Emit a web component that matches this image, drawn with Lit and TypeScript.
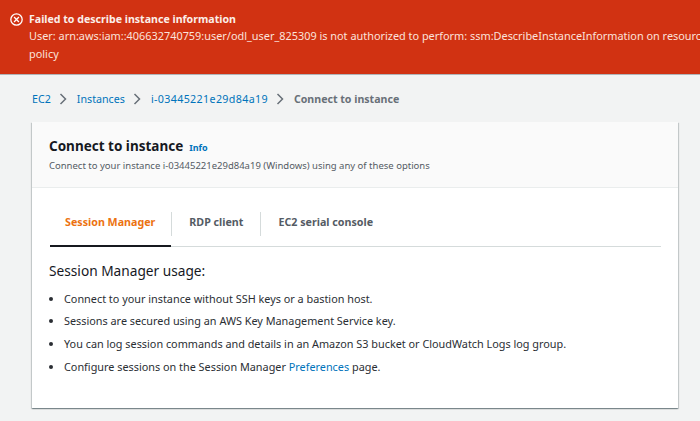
import { LitElement, html, css } from "lit";
import { customElement } from "lit/decorators.js";

@customElement("app-root")
export class AppRoot extends LitElement {
  static styles = css`
    :host { display: block; width: 700px; height: 421px; overflow: hidden; background: #f2f3f3; font-family: "Noto Sans", sans-serif; color: #16191f; }
    .flash { height: 75px; box-sizing: border-box; background: #d13212; color: #fff; padding: 12px 0 0 10px; display: flex; gap: 6px; border-bottom: 1px solid #b0b4b8; white-space: nowrap; overflow: hidden; }
    .flash svg { flex: none; width: 13px; height: 13px; margin-top: 1px; }
    .flash .msg { font-size: 10.9px; line-height: 17.5px; color: #fbe3dc; }
    .flash b { display: block; font-size: 10.6px; font-weight: 700; color: #fbeee9; line-height: 15px; }
    .crumbs { display: flex; align-items: center; height: 46px; padding: 1px 0 0 32px; font-size: 10.7px; color: #0073bb; }
    .crumbs svg { width: 9px; height: 12px; margin: 0 8.5px; }
    .crumbs .id { letter-spacing: .35px; }
    .crumbs .cur { color: #687078; font-weight: 700; font-size: 10.6px; }
    .card { margin: 0 22px 0 32px; height: 286px; background: #fff; box-shadow: 0 1px 1px 0 rgba(0,28,36,.3), 1px 1px 1px 0 rgba(0,28,36,.15), -1px 1px 1px 0 rgba(0,28,36,.15); }
    .head { height: 66px; box-sizing: border-box; background: #fafafa; border-bottom: 1px solid #eaeded; padding: 14px 17px 0; }
    .title { display: flex; align-items: baseline; gap: 6px; font-size: 13.5px; font-weight: 700; line-height: 20px; color: #16191f; }
    .title a { font-size: 9px; color: #0073bb; }
    .desc { font-size: 9.5px; line-height: 12px; color: #545b64; margin-top: 2px; }
    .tabs { display: flex; margin: 12px 17px 0 18px; height: 47px; border-bottom: 1px solid #d5dbdb; align-items: stretch; box-sizing: border-box; }
    .tab { display: flex; align-items: center; padding: 0 17px 2px 18px; font-size: 10.7px; font-weight: 700; color: #545b64; position: relative; }
    .tab + .tab::before { content: ""; position: absolute; left: 0; top: 12px; height: 24px; width: 1px; background: #d5dbdb; }
    .tab.on { color: #ec7211; border-bottom: 2px solid #16191f; margin-bottom: -1px; padding: 0 16px 1px 15px; }
    .body { padding: 14px 17px 0; }
    h2 { margin: 0; font-size: 13.7px; font-weight: 400; line-height: 20px; color: #16191f; }
    ul { margin: 9.5px 0 0; padding: 0 0 0 15px; font-size: 10.85px; line-height: 15px; color: #2a2e33; }
    li { margin-bottom: 7.7px; }
    li a { color: #0073bb; }
  `;
  render() {
    const chev = html`<svg viewBox="0 0 9 12"><path d="M1.5 1l5 5-5 5" fill="none" stroke="#687078" stroke-width="1.5"/></svg>`;
    return html`
      <div class="flash">
        <svg viewBox="0 0 16 16"><circle cx="8" cy="8" r="7" fill="none" stroke="#fff" stroke-width="1.6"/><path d="M5 5l6 6M11 5l-6 6" stroke="#fff" stroke-width="1.6"/></svg>
        <div class="msg"><b>Failed to describe instance information</b>User: arn:aws:iam::406632740759:user/odl_user_825309 is not authorized to perform: ssm:DescribeInstanceInformation on resource: arn:aws:ssm<br>policy</div>
      </div>
      <div class="crumbs"><span>EC2</span>${chev}<span>Instances</span>${chev}<span class="id">i-03445221e29d84a19</span>${chev}<span class="cur">Connect to instance</span></div>
      <div class="card">
        <div class="head">
          <div class="title">Connect to instance <a>Info</a></div>
          <div class="desc">Connect to your instance i-03445221e29d84a19 (Windows) using any of these options</div>
        </div>
        <div class="tabs">
          <div class="tab on">Session Manager</div>
          <div class="tab">RDP client</div>
          <div class="tab">EC2 serial console</div>
        </div>
        <div class="body">
          <h2>Session Manager usage:</h2>
          <ul>
            <li>Connect to your instance without SSH keys or a bastion host.</li>
            <li>Sessions are secured using an AWS Key Management Service key.</li>
            <li>You can log session commands and details in an Amazon S3 bucket or CloudWatch Logs log group.</li>
            <li>Configure sessions on the Session Manager <a>Preferences</a> page.</li>
          </ul>
        </div>
      </div>
    `;
  }
}
